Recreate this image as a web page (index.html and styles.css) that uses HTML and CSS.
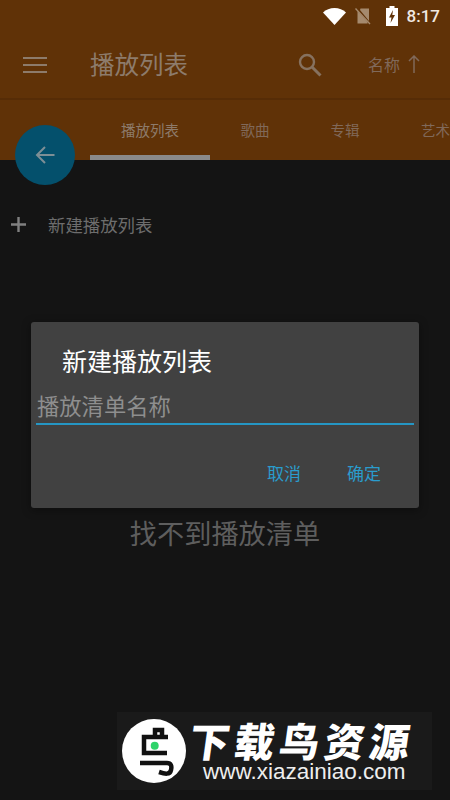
FILE: index.html
```html
<!DOCTYPE html>
<html>
<head>
    <meta charset="UTF-8">
    <meta name="viewport" content="width=device-width, initial-scale=1.0">
    <title>播放列表</title>
    <link rel="stylesheet" href="styles.css">
</head>
<body>
    <div class="header">
        <div class="status-bar">
            <svg class="wifi-icon" width="23" height="18" viewBox="0 0 23 18"><path d="M0 5.500C3 2.500 7 1 11.500 1S20 2.500 23 5.500L11.500 18z" fill="#fff"/></svg>
            <svg class="sim-icon" width="18" height="18" viewBox="0 0 18 18"><path d="M6.500 1.500H15V14L6 3z M3.500 5V16.500H13.500V15L3.500 4z" fill="#a58a6e"/><path d="M1.500 1.500L16 17" stroke="#a58a6e" stroke-width="1.300"/></svg>
            <svg class="battery-icon" width="12" height="20" viewBox="0 0 12 20"><path d="M3.500 0H8.500V2H12V20H0V2H3.500z" fill="#fff"/><path d="M7 4L3 11.500H5.500L4.500 17L9 9H6.300z" fill="#603207"/></svg>
            <span class="clock">8:17</span>
        </div>
        <div class="toolbar">
            <svg class="menu-icon" width="24" height="16" viewBox="0 0 24 16"><path d="M0 1H24M0 8H24M0 15H24" stroke="#8d7b6b" stroke-width="2.200"/></svg>
            <h1 class="title">播放列表</h1>
            <svg class="search-icon" width="24" height="24" viewBox="0 0 24 24"><circle cx="9" cy="9" r="7" fill="none" stroke="#86715f" stroke-width="2.400"/><path d="M14 14L22.500 22.500" stroke="#86715f" stroke-width="3"/></svg>
            <span class="sort">名称<svg class="sort-arrow" width="12" height="18" viewBox="0 0 12 18"><path d="M6 18V1M1 6L6 1L11 6" fill="none" stroke="#80695a" stroke-width="1.500"/></svg></span>
        </div>
        <div class="tabs">
            <div class="tab tab-active">播放列表</div>
            <div class="tab">歌曲</div>
            <div class="tab">专辑</div>
            <div class="tab tab-last">艺术</div>
        </div>
    </div>

    <div class="main">
        <div class="new-row">
            <svg width="15" height="15" viewBox="0 0 15 15"><path d="M7.500 0V15M0 7.500H15" stroke="#808080" stroke-width="2.400"/></svg>
            <span class="new-label">新建播放列表</span>
        </div>
        <div class="empty">找不到播放清单</div>
    </div>

    <div class="fab">
        <svg width="20" height="20" viewBox="0 0 20 20"><path d="M19.500 10H2M10 2L2 10L10 18" fill="none" stroke="#7d8f96" stroke-width="2"/></svg>
    </div>

    <div class="dialog">
        <div class="dialog-title">新建播放列表</div>
        <div class="dialog-input">播放清单名称</div>
        <div class="dialog-buttons">
            <span class="dialog-button">取消</span>
            <span class="dialog-button">确定</span>
        </div>
    </div>

    <div class="watermark">
        <div class="logo">
            <svg width="64" height="64" viewBox="0 0 64 64"><path d="M33 16V11H40V17M46 18H22V34H45M18 44H45C49 44 50 47 49 51C48 56 43 55 37 53" fill="none" stroke="#111" stroke-width="4.500"/><circle cx="32.700" cy="26.700" r="4" fill="#2fd36a"/></svg>
        </div>
        <div class="brand">
            <div class="brand-name">下载鸟资源</div>
            <div class="brand-url">www.xiazainiao.com</div>
        </div>
    </div>
</body>
</html>
```

FILE: styles.css
```css
body {
    margin: 0;
    width: 450px;
    height: 800px;
    overflow: hidden;
    position: relative;
    background-color: #141414;
    font-family: "Noto Sans CJK SC", "Liberation Sans", sans-serif;
}

.header {
    height: 160px;
    background-color: #603207;
    display: flex;
    flex-direction: column;
}

.status-bar {
    height: 32px;
    display: flex;
    align-items: center;
    justify-content: flex-end;
    padding-right: 10px;
}

.wifi-icon {
    margin-right: 8px;
}

.sim-icon {
    margin-right: 14px;
}

.battery-icon {
    margin-right: 9px;
}

.clock {
    font-family: Roboto, sans-serif;
    font-size: 17px;
    font-weight: 500;
    color: #f0e9e2;
}

.toolbar {
    height: 68px;
    display: flex;
    align-items: center;
    box-sizing: border-box;
    border-bottom: 2px solid #562c06;
    padding-left: 23px;
}

.title {
    margin: -3px 0 0 43px;
    width: 208px;
    font-size: 24.500px;
    font-weight: 400;
    color: #8d7b6b;
}

.search-icon {
    margin-right: 46px;
}

.sort {
    display: flex;
    align-items: center;
    margin-top: -3px;
    font-size: 16px;
    color: #80695a;
}

.sort-arrow {
    margin-left: 8px;
}

.tabs {
    height: 60px;
    display: flex;
    padding-left: 90px;
    overflow: hidden;
}

.tab {
    width: 90px;
    flex-shrink: 0;
    box-sizing: border-box;
    padding-top: 19px;
    text-align: center;
    font-size: 14.500px;
    color: #80695a;
}

.tab-active {
    width: 120px;
    color: #8d7b6b;
    border-bottom: 5px solid #8a8a8a;
}

.tab-last {
    width: 60px;
    padding-left: 31px;
    text-align: left;
    white-space: nowrap;
}

.main {
    height: 640px;
    display: flex;
    flex-direction: column;
}

.new-row {
    display: flex;
    align-items: center;
    padding: 52px 0 0 11px;
}

.new-label {
    margin-left: 22px;
    font-size: 17.400px;
    color: #6d6d6d;
}

.empty {
    margin-top: 275px;
    text-align: center;
    font-size: 27.200px;
    color: #5e5e5e;
}

.fab {
    position: absolute;
    left: 15px;
    top: 125px;
    width: 60px;
    height: 60px;
    border-radius: 50%;
    background-color: #04506c;
    display: flex;
    align-items: center;
    justify-content: center;
}

.dialog {
    position: absolute;
    left: 31px;
    top: 322px;
    width: 388px;
    height: 186px;
    box-sizing: border-box;
    padding: 20px 5px 0 5px;
    border-radius: 3px;
    background-color: #414141;
    box-shadow: 0 2px 10px rgba(0, 0, 0, 0.4);
}

.dialog-title {
    padding-left: 26px;
    font-size: 25px;
    line-height: 36px;
    color: #fff;
}

.dialog-input {
    margin-top: 11px;
    padding-left: 1px;
    height: 36px;
    box-sizing: border-box;
    border-bottom: 2.500px solid #2596c4;
    font-size: 22.300px;
    line-height: 32px;
    color: #8e8e8e;
}

.dialog-buttons {
    display: flex;
    justify-content: flex-end;
    gap: 46px;
    margin-top: 35px;
    padding-right: 33px;
}

.dialog-button {
    font-size: 17px;
    line-height: 26px;
    color: #2a9ccd;
}

.watermark {
    position: absolute;
    left: 117px;
    top: 712px;
    width: 315px;
    height: 78px;
    box-sizing: border-box;
    padding-left: 5px;
    background-color: #1a1a1a;
    display: flex;
    align-items: center;
}

.logo {
    width: 64px;
    height: 64px;
    border-radius: 50%;
    background-color: #fff;
}

.brand {
    margin-left: 4px;
}

.brand-name {
    font-size: 40px;
    line-height: 38px;
    margin-top: 3px;
    font-weight: 900;
    letter-spacing: 5px;
    transform: skewX(-8deg);
    color: #fff;
}

.brand-url {
    margin-left: 13px;
    font-family: "Liberation Sans", sans-serif;
    font-size: 22.500px;
    line-height: 26px;
    color: #eee;
}
```
